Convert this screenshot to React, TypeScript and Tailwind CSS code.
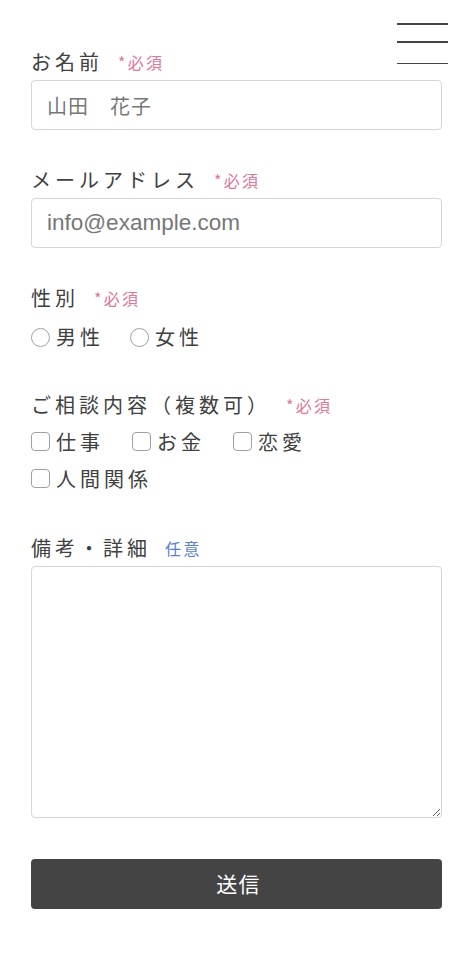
const jp = "font-['Noto_Sans_CJK_JP','Noto_Sans',sans-serif]";

function Required() {
  return <span className="ml-[15px] text-[16px] tracking-[0.14em] text-[#e0769c]">*必須</span>;
}

function Label({ text, children }: { text: string; children?: React.ReactNode }) {
  return (
    <div className="flex h-[28px] items-center mb-[4px]">
      <span className="text-[20px] tracking-[0.2em] text-[#404040]">{text}</span>
      {children}
    </div>
  );
}

function Radio({ label }: { label: string }) {
  return (
    <label className="mr-[26px] flex items-center">
      <span className="h-[19px] w-[19px] rounded-full border border-[#a0a0a0] bg-white" />
      <span className="ml-[6px] text-[20px] tracking-[0.2em] text-[#404040]">{label}</span>
    </label>
  );
}

function Check({ label }: { label: string }) {
  return (
    <label className="mr-[28px] flex items-center">
      <span className="h-[19px] w-[19px] rounded-[4px] border border-[#a0a0a0] bg-white" />
      <span className="ml-[6px] text-[20px] tracking-[0.2em] text-[#404040]">{label}</span>
    </label>
  );
}

export default function App() {
  return (
    <div className={`relative min-h-[960px] bg-white ${jp}`}>
      <button className="absolute right-[24px] top-[23px] flex h-[41px] w-[51px] flex-col justify-between">
        <span className="block h-[1.5px] w-full bg-[#444]" />
        <span className="-mt-[3px] block h-[1.5px] w-full bg-[#444]" />
        <span className="block h-[1.5px] w-full bg-[#444]" />
      </button>

      <form className="px-[31px] pr-[30px] pt-[48px]">
        <Label text="お名前">
          <Required />
        </Label>
        <input
          className="block h-[50px] w-full rounded-[4px] border border-[#d6d6d6] px-[15px] text-[20px] tracking-[0.05em] text-[#333] outline-none placeholder:text-[#777]"
          placeholder="山田　花子"
        />

        <div className="mt-[36px]">
          <Label text="メールアドレス">
            <Required />
          </Label>
          <input
            className="block h-[50px] w-full rounded-[4px] border border-[#d6d6d6] px-[15px] font-['Liberation_Sans',Arial,sans-serif] text-[22.5px] text-[#333] outline-none placeholder:text-[#777]"
            placeholder="info@example.com"
          />
        </div>

        <div className="mt-[36px]">
          <Label text="性別">
            <Required />
          </Label>
          <div className="mt-[7px] flex h-[36px] items-center">
            <Radio label="男性" />
            <Radio label="女性" />
          </div>
        </div>

        <div className="mt-[36px]">
          <Label text="ご相談内容（複数可）">
            <Required />
          </Label>
          <div className="mt-[1px] flex h-[37px] items-center">
            <Check label="仕事" />
            <Check label="お金" />
            <Check label="恋愛" />
          </div>
          <div className="flex h-[37px] items-center">
            <Check label="人間関係" />
          </div>
        </div>

        <div className="mt-[37px]">
          <Label text="備考・詳細">
            <span className="ml-[14px] text-[16px] tracking-[0.14em] text-[#5a7fd4]">任意</span>
          </Label>
          <textarea className="mt-[1px] block h-[252px] w-full rounded-[4px] border border-[#d6d6d6] p-[10px] text-[18px] outline-none" />
        </div>

        <button
          type="button"
          className="mt-[41px] flex h-[50px] w-full items-center justify-center rounded-[4px] bg-[#444] pl-[4px] text-[21px] tracking-[0.06em] text-white"
        >
          送信
        </button>
      </form>
    </div>
  );
}
